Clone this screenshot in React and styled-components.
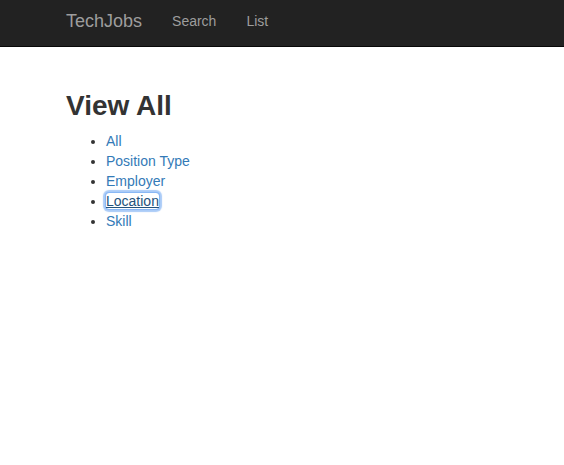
import React from "react";
import styled, { createGlobalStyle } from "styled-components";

const Global = createGlobalStyle`
  html, body { margin: 0; padding: 0; background: #fff; }
  body {
    font-family: "Liberation Sans", Arial, Helvetica, sans-serif;
    font-size: 14px;
    line-height: 20px;
    color: #333;
  }
`;

const Navbar = styled.nav`
  background: #222;
  border-bottom: 1px solid #080808;
  height: 47px;
  box-sizing: border-box;
  padding-bottom: 5px;
  margin-bottom: 20px;
`;

const NavContainer = styled.div`
  display: flex;
  align-items: center;
  height: 100%;
  padding-left: 51px;
`;

const Brand = styled.a`
  font-size: 18px;
  line-height: 20px;
  padding: 0 15px;
  color: #9d9d9d;
  text-decoration: none;
`;

const NavLink = styled.a`
  font-size: 14px;
  line-height: 20px;
  padding: 0 15px;
  color: #9d9d9d;
  text-decoration: none;
`;

const Container = styled.main`
  padding: 23px 0 0 66px;
`;

const Heading = styled.h1`
  font-size: 28px;
  font-weight: bold;
  line-height: 31px;
  margin: 0 0 10px;
  color: #333;
`;

const List = styled.ul`
  margin: 0;
  padding-left: 40px;
`;

const Item = styled.li`
  line-height: 20px;
`;

const Link = styled.a`
  color: ${(p) => (p.$focused ? "#23527c" : "#337ab7")};
  text-decoration: ${(p) => (p.$focused ? "underline" : "none")};
  border-radius: 3px;
  box-shadow: ${(p) =>
    p.$focused
      ? "0 0 0 1px #8ab8f5, 0 0 1px 3px rgba(100,160,240,0.55)"
      : "none"};
`;

const items = ["All", "Position Type", "Employer", "Location", "Skill"];

export default function App() {
  return (
    <>
      <Global />
      <Navbar>
        <NavContainer>
          <Brand href="#">TechJobs</Brand>
          <NavLink href="#">Search</NavLink>
          <NavLink href="#">List</NavLink>
        </NavContainer>
      </Navbar>
      <Container>
        <Heading>View All</Heading>
        <List>
          {items.map((t) => (
            <Item key={t}>
              <Link href="#" $focused={t === "Location"}>
                {t}
              </Link>
            </Item>
          ))}
        </List>
      </Container>
    </>
  );
}
